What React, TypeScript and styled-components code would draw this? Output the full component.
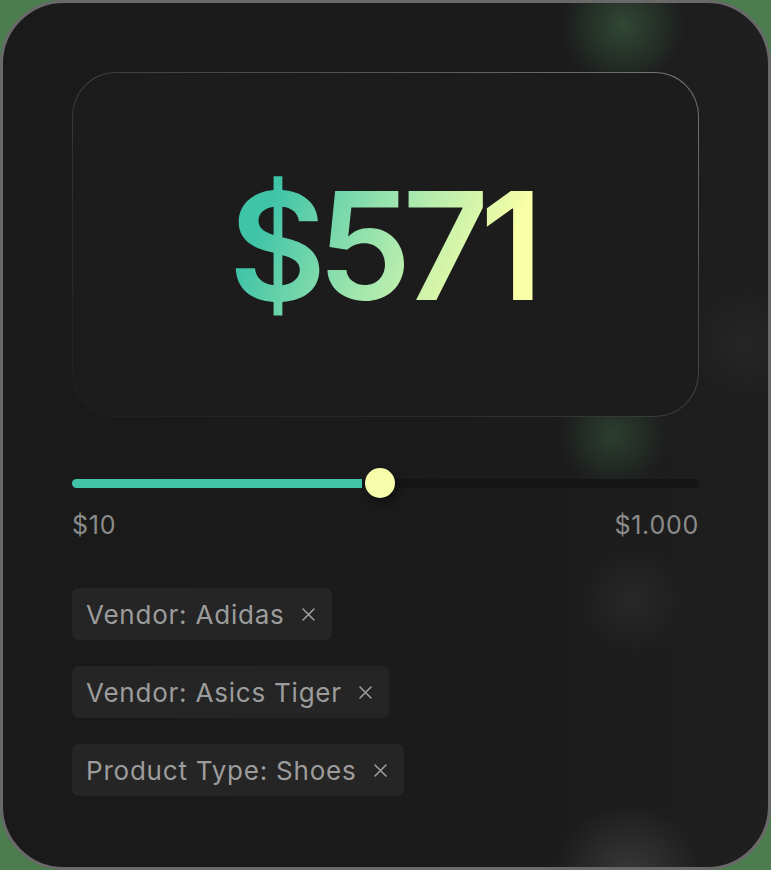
import React from "react";
import styled, { createGlobalStyle } from "styled-components";

const Global = createGlobalStyle`
  html, body {
    margin: 0;
    padding: 0;
    background: #4b7d4f;
  }
  * { box-sizing: border-box; }
`;

const Card = styled.div`
  width: 771px;
  height: 870px;
  border: 3px solid #696969;
  border-radius: 64px;
  padding: 69px;
  display: flex;
  flex-direction: column;
  font-family: Inter, "Noto Sans", sans-serif;
  background:
    radial-gradient(circle at 620px 22px, rgba(84, 150, 98, 0.36), rgba(84, 150, 98, 0) 62px),
    radial-gradient(circle at 610px 432px, rgba(84, 150, 98, 0.28), rgba(84, 150, 98, 0) 55px),
    radial-gradient(circle at 628px 598px, rgba(255, 255, 255, 0.05), rgba(255, 255, 255, 0) 55px),
    radial-gradient(circle at 625px 875px, rgba(255, 255, 255, 0.13), rgba(255, 255, 255, 0) 75px),
    radial-gradient(circle at 740px 340px, rgba(255, 255, 255, 0.03), rgba(255, 255, 255, 0) 55px),
    linear-gradient(to right, #1a1a1a 0%, #1b1b1b 70%, #1f1f1f 100%);
`;

const Display = styled.div`
  height: 345px;
  flex: none;
  border-radius: 44px;
  border: 1.5px solid transparent;
  background:
    linear-gradient(#1c1c1c, #1c1c1c) padding-box,
    linear-gradient(to bottom left, #777777 0%, #4a4a4a 35%, #2c2c2c 70%, #1f1f1f 100%) border-box;
  display: flex;
  align-items: center;
  justify-content: center;
`;

const Price = styled.div`
  font-family: Inter, sans-serif;
  font-size: 150px;
  font-weight: 600;
  letter-spacing: -0.06em;
  line-height: 1;
  padding-right: 8px;
  margin-top: 2px;
  background: linear-gradient(115deg, #40c4a7 15%, #a6e8ae 50%, #f8ffa6 82%);
  -webkit-background-clip: text;
  background-clip: text;
  color: transparent;
`;

const SliderWrap = styled.div`
  margin-top: 51px;
  height: 30px;
  display: flex;
  align-items: center;
  position: relative;
`;

const Track = styled.div`
  width: 100%;
  height: 9px;
  border-radius: 5px;
  background: #151515;
  display: flex;
`;

const Fill = styled.div`
  height: 100%;
  border-radius: 5px 0 0 5px;
  background: #42c3a7;
`;

const Thumb = styled.div`
  position: absolute;
  top: 0;
  width: 30px;
  height: 30px;
  border-radius: 50%;
  background: #f6fdaa;
  box-shadow: 4px 6px 10px rgba(0, 0, 0, 0.35);
  transform: translateX(-50%);
`;

const Scale = styled.div`
  margin-top: 12px;
  display: flex;
  justify-content: space-between;
  font-size: 25px;
  letter-spacing: 0.03em;
  line-height: 30px;
  color: #8b8b8b;
`;

const Tags = styled.div`
  margin-top: 48px;
  display: flex;
  flex-direction: column;
  align-items: flex-start;
  gap: 26px;
`;

const Tag = styled.div`
  height: 52px;
  padding: 0 17px 0 14px;
  border-radius: 7px;
  background: #252525;
  color: #9c9c9c;
  font-size: 26px;
  letter-spacing: 0.03em;
  display: flex;
  align-items: center;
  gap: 17px;
`;

const Close = () => (
  <svg width="13" height="13" viewBox="0 0 13 13" fill="none">
    <path d="M1 1L12 12M12 1L1 12" stroke="#9c9c9c" strokeWidth="1.6" strokeLinecap="round" />
  </svg>
);

const tags = ["Vendor: Adidas", "Vendor: Asics Tiger", "Product Type: Shoes"];

export default function App() {
  const fraction = 0.492;
  return (
    <>
      <Global />
      <Card>
        <Display>
          <Price>$571</Price>
        </Display>
        <SliderWrap>
          <Track>
            <Fill style={{ width: `calc(${fraction * 100}% - 18px)` }} />
          </Track>
          <Thumb style={{ left: `${fraction * 100}%` }} />
        </SliderWrap>
        <Scale>
          <span>$10</span>
          <span>$1.000</span>
        </Scale>
        <Tags>
          {tags.map((t) => (
            <Tag key={t}>
              <span>{t}</span>
              <Close />
            </Tag>
          ))}
        </Tags>
      </Card>
    </>
  );
}
